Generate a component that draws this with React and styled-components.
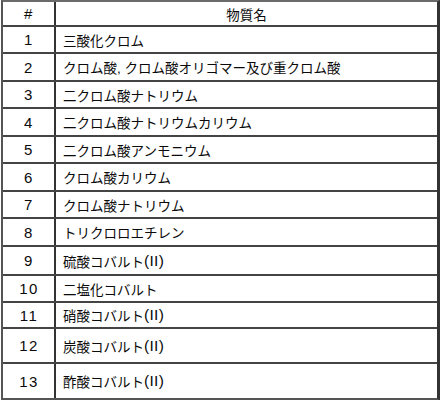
import styled, { createGlobalStyle } from 'styled-components';

const GlobalStyle = createGlobalStyle`
  html, body {
    margin: 0;
    padding: 0;
    background: #ffffff;
  }
  body {
    font-family: 'Liberation Sans', 'Noto Sans CJK JP', sans-serif;
    color: #0a0a0a;
  }
`;

const substances = [
  { no: 1, name: '三酸化クロム', h: 27 },
  { no: 2, name: 'クロム酸, クロム酸オリゴマー及び重クロム酸', h: 28 },
  { no: 3, name: '二クロム酸ナトリウム', h: 27 },
  { no: 4, name: '二クロム酸ナトリウムカリウム', h: 28 },
  { no: 5, name: '二クロム酸アンモニウム', h: 27 },
  { no: 6, name: 'クロム酸カリウム', h: 28 },
  { no: 7, name: 'クロム酸ナトリウム', h: 27 },
  { no: 8, name: 'トリクロロエチレン', h: 28 },
  { no: 9, name: '硫酸コバルト', ox: '(II)', h: 29 },
  { no: 10, name: '二塩化コバルト', h: 27 },
  { no: 11, name: '硝酸コバルト', ox: '(II)', h: 26 },
  { no: 12, name: '炭酸コバルト', ox: '(II)', h: 35 },
  { no: 13, name: '酢酸コバルト', ox: '(II)', h: 34 },
];

const App = () => {
  return (
    <>
      <GlobalStyle />
      <Wrapper>
        <Table>
          <Row $h={25}>
            <NoCell>#</NoCell>
            <NameCell $center>物質名</NameCell>
          </Row>
          {substances.map((item) => (
            <Row $h={item.h} key={item.no}>
              <NoCell>{item.no}</NoCell>
              <NameCell>
                {item.name}
                {item.ox && <Oxidation>{item.ox}</Oxidation>}
              </NameCell>
            </Row>
          ))}
        </Table>
      </Wrapper>
    </>
  );
};

const Wrapper = styled.div`
  padding: 0 2px 0 1px;
  width: 442px;
  box-sizing: border-box;
`;

const Table = styled.div`
  display: flex;
  flex-direction: column;
  border-top: 2px solid #6a6a6a;
  border-left: 2px solid #555555;
  border-right: 3px solid #333333;
  border-bottom: 3px solid #555555;
  width: 439px;
  box-sizing: border-box;
`;

const Row = styled.div`
  display: grid;
  grid-template-columns: 53px 1fr;
  height: ${(p) => p.$h}px;
  box-sizing: border-box;
  border-bottom: 2px solid #444444;

  &:last-child {
    border-bottom: none;
  }
`;

const NoCell = styled.div`
  display: flex;
  align-items: center;
  justify-content: center;
  border-right: 2px solid #333333;
  font-size: 15px;
  letter-spacing: 1.5px;
  padding-left: 1px;
`;

const NameCell = styled.div`
  display: flex;
  align-items: center;
  justify-content: ${(p) => (p.$center ? 'center' : 'flex-start')};
  padding-left: ${(p) => (p.$center ? '0' : '7px')};
  font-size: 13.5px;
  white-space: nowrap;
`;

const Oxidation = styled.span`
  font-size: 15.5px;
  letter-spacing: 0.3px;
`;

export default App;
